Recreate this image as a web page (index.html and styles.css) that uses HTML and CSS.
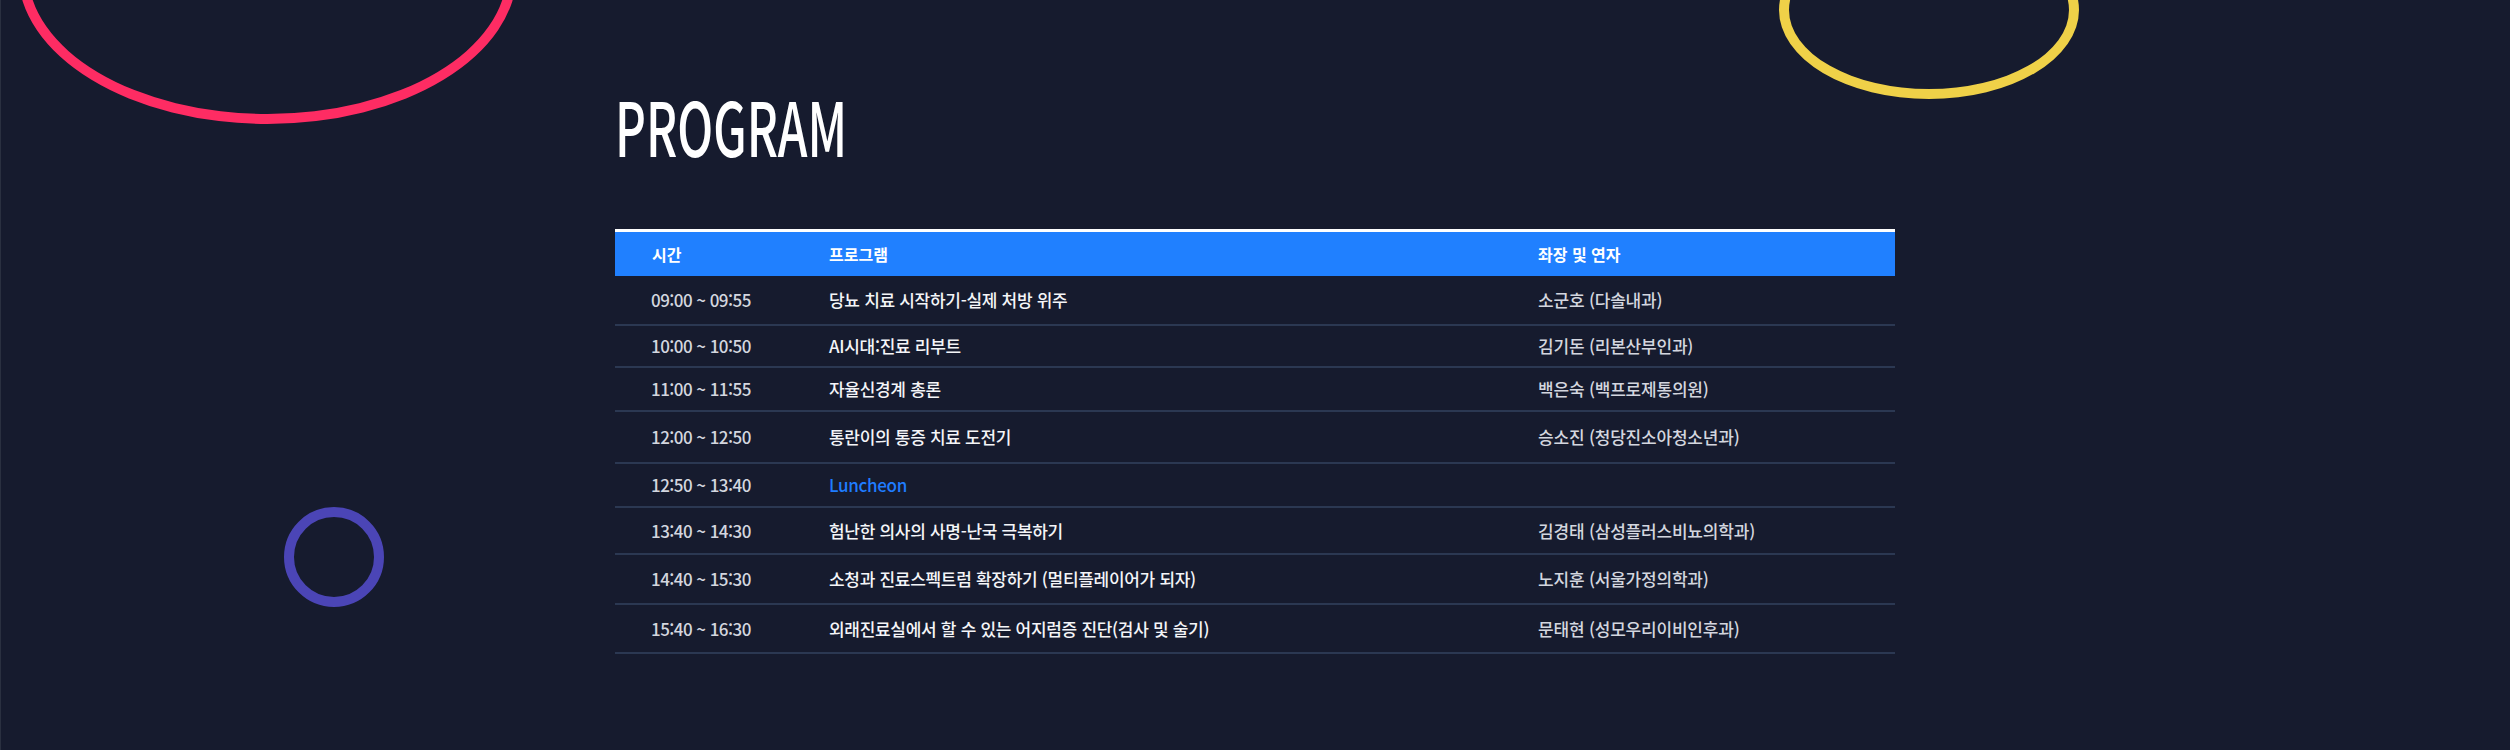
FILE: index.html
```html
<!DOCTYPE html>
<html lang="ko">
<head>
<meta charset="utf-8">
<title>PROGRAM</title>
<link rel="stylesheet" href="styles.css">
</head>
<body>
<div class="page">
  <span class="deco deco-pink"></span>
  <span class="deco deco-yellow"></span>
  <span class="deco deco-purple"></span>
  <section class="program">
    <h2 class="title"><span>PROGRAM</span></h2>
    <div class="schedule">
      <div class="row head">
        <div class="c-time">시간</div>
        <div class="c-prog">프로그램</div>
        <div class="c-spk">좌장 및 연자</div>
      </div>
      <div class="row">
        <div class="c-time">09:00 ~ 09:55</div>
        <div class="c-prog">당뇨 치료 시작하기-실제 처방 위주</div>
        <div class="c-spk">소군호 (다솔내과)</div>
      </div>
      <div class="row">
        <div class="c-time">10:00 ~ 10:50</div>
        <div class="c-prog">AI시대:진료 리부트</div>
        <div class="c-spk">김기돈 (리본산부인과)</div>
      </div>
      <div class="row">
        <div class="c-time">11:00 ~ 11:55</div>
        <div class="c-prog">자율신경계 총론</div>
        <div class="c-spk">백은숙 (백프로제통의원)</div>
      </div>
      <div class="row">
        <div class="c-time">12:00 ~ 12:50</div>
        <div class="c-prog">통란이의 통증 치료 도전기</div>
        <div class="c-spk">승소진 (청당진소아청소년과)</div>
      </div>
      <div class="row">
        <div class="c-time">12:50 ~ 13:40</div>
        <div class="c-prog lunch">Luncheon</div>
        <div class="c-spk"></div>
      </div>
      <div class="row">
        <div class="c-time">13:40 ~ 14:30</div>
        <div class="c-prog">험난한 의사의 사명-난국 극복하기</div>
        <div class="c-spk">김경태 (삼성플러스비뇨의학과)</div>
      </div>
      <div class="row">
        <div class="c-time">14:40 ~ 15:30</div>
        <div class="c-prog">소청과 진료스펙트럼 확장하기 (멀티플레이어가 되자)</div>
        <div class="c-spk">노지훈 (서울가정의학과)</div>
      </div>
      <div class="row">
        <div class="c-time">15:40 ~ 16:30</div>
        <div class="c-prog">외래진료실에서 할 수 있는 어지럼증 진단(검사 및 술기)</div>
        <div class="c-spk">문태현 (성모우리이비인후과)</div>
      </div>
    </div>
  </section>
</div>
</body>
</html>
```

FILE: styles.css
```css
* { box-sizing: border-box; }

html, body {
  margin: 0;
  padding: 0;
}

body {
  background: #161b2e;
  font-family: "Noto Sans CJK KR", "Noto Sans", sans-serif;
  color: #fff;
}

.page {
  position: relative;
  height: 750px;
  overflow: hidden;
  box-shadow: inset 1px 0 0 #2a3040;
}

.deco {
  position: absolute;
  display: block;
  border-radius: 50%;
  border-style: solid;
}

.deco-pink {
  left: 18px;
  top: -180px;
  width: 499px;
  height: 304px;
  border-width: 10px;
  border-color: #fe2c63;
}

.deco-yellow {
  left: 1779px;
  top: -79px;
  width: 300px;
  height: 178px;
  border-width: 10px;
  border-color: #efd148;
}

.deco-purple {
  left: 284px;
  top: 507px;
  width: 100px;
  height: 100px;
  border-width: 10px;
  border-color: #4b45b6;
}

.program {
  position: relative;
  width: 1280px;
  margin: 0 auto;
  padding-top: 88px;
}

.title {
  margin: 0;
  height: 74px;
  font-size: 74px;
  line-height: 74px;
  font-weight: 500;
  color: #fff;
}

.title span {
  display: inline-block;
  transform: scaleX(0.645);
  transform-origin: left center;
}

.schedule {
  margin-top: 67px;
  border-top: 3px solid #fff;
}

.row {
  display: grid;
  grid-template-columns: 214px 709px 1fr;
  align-items: center;
  border-bottom: 2px solid #2b3852;
  font-size: 17px;
  font-weight: 500;
  letter-spacing: -0.3px;
  line-height: 20px;
}

.row .c-time {
  padding-left: 36px;
  color: #d3d6df;
  letter-spacing: -0.55px;
}

.row .c-prog {
  color: #f4f5f8;
}

.row .c-spk {
  color: #d3d6df;
  letter-spacing: -0.2px;
}

.row .lunch {
  color: #1f7cff;
}

.row.head {
  height: 44px;
  background: #2080ff;
  border-bottom: none;
  font-size: 16px;
  font-weight: 700;
}

.row.head .c-time,
.row.head .c-prog,
.row.head .c-spk {
  color: #fff;
  letter-spacing: 0;
}

.row.head .c-time {
  padding-left: 37px;
}

.row:nth-child(2) { height: 50px; }
.row:nth-child(3) { height: 42px; }
.row:nth-child(4) { height: 44px; }
.row:nth-child(5) { height: 52px; }
.row:nth-child(6) { height: 44px; }
.row:nth-child(7) { height: 47px; }
.row:nth-child(8) { height: 50px; }
.row:nth-child(9) { height: 49px; }
```
